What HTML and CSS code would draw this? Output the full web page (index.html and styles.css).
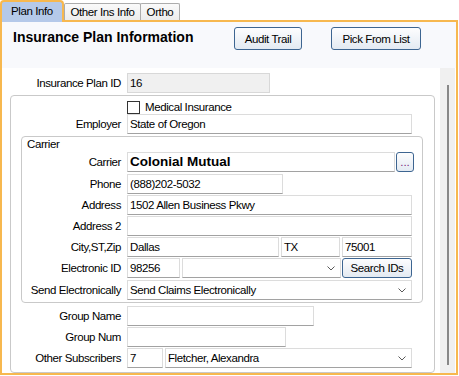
FILE: index.html
```html
<!DOCTYPE html>
<html>
<head>
    <meta charset="UTF-8">
    <title>Insurance Plan</title>
    <link rel="stylesheet" href="styles.css">
</head>
<body>
    <div class="tabs">
        <div class="tab active">Plan Info</div>
        <div class="tab other">Other Ins Info</div>
        <div class="tab ortho">Ortho</div>
    </div>
    <div class="panel">
        <div class="header">
            <div class="title">Insurance Plan Information</div>
            <button class="btn audit">Audit Trail</button>
            <button class="btn pick">Pick From List</button>
        </div>
        <div class="body">
            <div class="content">
                <div class="row">
                    <span class="label">Insurance Plan ID</span>
                    <span class="field readonly w-id">16</span>
                </div>
                <div class="group outer">
                    <div class="check-row">
                        <span class="checkbox"></span>
                        <span class="check-text">Medical Insurance</span>
                    </div>
                    <div class="row">
                        <span class="label">Employer</span>
                        <span class="field w-full">State of Oregon</span>
                    </div>
                    <div class="group carrier">
                        <div class="legend">Carrier</div>
                        <div class="row gap2">
                            <span class="label">Carrier</span>
                            <span class="field bold w-carrier">Colonial Mutual</span>
                            <button class="btn dots">...</button>
                        </div>
                        <div class="row gap1">
                            <span class="label">Phone</span>
                            <span class="field w-phone">(888)202-5032</span>
                        </div>
                        <div class="row gap1">
                            <span class="label">Address</span>
                            <span class="field w-full">1502 Allen Business Pkwy</span>
                        </div>
                        <div class="row gap1">
                            <span class="label">Address 2</span>
                            <span class="field w-full"></span>
                        </div>
                        <div class="row gap1">
                            <span class="label">City,ST,Zip</span>
                            <span class="field w-city">Dallas</span>
                            <span class="field w-st">TX</span>
                            <span class="field w-zip">75001</span>
                        </div>
                        <div class="row gap2">
                            <span class="label">Electronic ID</span>
                            <span class="field w-eid">98256</span>
                            <span class="field combo w-eidcombo">
                                <span></span>
                                <svg width="8" height="5" viewBox="0 0 8 5"><path d="M0.5 0.5 L4 4 L7.5 0.5" fill="none" stroke="#5a5a5a"/></svg>
                            </span>
                            <button class="btn search">Search IDs</button>
                        </div>
                        <div class="row">
                            <span class="label">Send Electronically</span>
                            <span class="field combo w-full">
                                <span>Send Claims Electronically</span>
                                <svg width="8" height="5" viewBox="0 0 8 5"><path d="M0.5 0.5 L4 4 L7.5 0.5" fill="none" stroke="#5a5a5a"/></svg>
                            </span>
                        </div>
                    </div>
                    <div class="row group-name">
                        <span class="label">Group Name</span>
                        <span class="field w-gname"></span>
                    </div>
                    <div class="row gap1">
                        <span class="label">Group Num</span>
                        <span class="field w-gnum"></span>
                    </div>
                    <div class="row gap1">
                        <span class="label">Other Subscribers</span>
                        <span class="field w-count">7</span>
                        <span class="field combo w-sub">
                            <span>Fletcher, Alexandra</span>
                            <svg width="8" height="5" viewBox="0 0 8 5"><path d="M0.5 0.5 L4 4 L7.5 0.5" fill="none" stroke="#5a5a5a"/></svg>
                        </span>
                    </div>
                </div>
            </div>
            <div class="scrollbar"><div class="thumb"></div></div>
        </div>
    </div>
</body>
</html>
```

FILE: styles.css
```css
*{
    box-sizing: border-box;
}
body{
    margin: 0;
    background-color: #ffffff;
    font-family: "Liberation Sans", Arial, sans-serif;
    font-size: 11.5px;
    letter-spacing: -0.4px;
    color: #000000;
}

/* tabs */
.tabs{
    display: flex;
    align-items: flex-end;
    height: 22px;
    margin-bottom: -2px;
    position: relative;
    z-index: 1;
}
.tab{
    height: 17px;
    margin-bottom: 2px;
    border: 1px solid #acacac;
    border-bottom: none;
    border-radius: 2px 2px 0 0;
    background: linear-gradient(#fafafa, #ececec);
    line-height: 16px;
    text-align: center;
}
.tab.active{
    width: 64px;
    height: 22px;
    margin-bottom: 0;
    border: 2px solid #f7b84f;
    border-bottom: none;
    border-radius: 4px 4px 0 0;
    background: #b5c9e9;
    line-height: 18px;
    text-align: left;
    padding-left: 9px;
}
.tab.other{
    width: 77px;
}
.tab.ortho{
    width: 40px;
    margin-left: -1px;
}

/* panel */
.panel{
    width: 458px;
    height: 355px;
    border: 2px solid #f7b84f;
    display: flex;
    flex-direction: column;
}
.header{
    flex: none;
    height: 46px;
    background-color: #f8f9fc;
    display: flex;
    align-items: flex-start;
    padding: 5px 0 0 11px;
}
.title{
    width: 221px;
    margin-top: 2px;
    font-size: 14px;
    font-weight: bold;
    letter-spacing: 0;
    line-height: 16px;
}
.btn{
    font-family: inherit;
    font-size: 11.5px;
    letter-spacing: -0.4px;
    color: #000000;
    padding: 0;
    border: 1px solid #3d6591;
    border-radius: 3px;
    background: linear-gradient(#fdfdfe, #e3eaf2);
}
.audit{
    width: 68px;
    height: 23px;
}
.pick{
    width: 90px;
    height: 23px;
    margin-left: 29px;
}

.body{
    flex: 1;
    display: flex;
    background-color: #ffffff;
}
.content{
    flex: 1;
    padding-top: 5px;
}
.scrollbar{
    width: 15px;
    margin-right: 1px;
    background-color: #f0f0f0;
    padding: 17px 0 0 7px;
}
.thumb{
    width: 2px;
    height: 280px;
    background-color: #888888;
}

/* rows */
.row{
    display: flex;
    align-items: center;
    height: 20px;
}
.gap1{
    margin-bottom: 1px;
}
.gap2{
    margin-bottom: 2px;
}
.label{
    flex: none;
    width: 119px;
    margin-right: 6px;
    text-align: right;
    white-space: nowrap;
}
.outer .label{
    width: 110px;
}
.carrier .label{
    width: 99px;
}

.field{
    flex: none;
    height: 20px;
    border: 1px solid #dcdcdc;
    border-bottom-color: #a2a2a2;
    background-color: #ffffff;
    padding-left: 2px;
    line-height: 18px;
    white-space: nowrap;
    overflow: hidden;
    margin-right: 2px;
}
.readonly{
    background-color: #f0f0f0;
    border-color: #d8d8d8;
}
.bold{
    font-size: 13.5px;
    font-weight: bold;
    letter-spacing: 0;
    margin-right: 1px;
}
.combo{
    display: flex;
    align-items: center;
    justify-content: space-between;
    padding-right: 5px;
}

.w-id{ width: 143px; }
.w-full{ width: 285px; }
.w-carrier{ width: 268px; }
.w-phone{ width: 156px; }
.w-city{ width: 152px; }
.w-st{ width: 59px; }
.w-zip{ width: 70px; }
.w-eid{ width: 53px; }
.w-eidcombo{ width: 159px; margin-right: 1px; }
.w-gname{ width: 187px; }
.w-gnum{ width: 159px; }
.w-count{ width: 36px; }
.w-sub{ width: 247px; }

.dots{
    width: 18px;
    height: 20px;
    color: #7a1f7a;
    letter-spacing: 0;
    line-height: 16px;
}
.search{
    width: 70px;
    height: 20px;
}

/* group boxes */
.group{
    border: 1px solid #c9c9c9;
    border-radius: 4px;
}
.outer{
    width: 425px;
    height: 278px;
    margin: 2px 0 0 8px;
}
.carrier{
    width: 402px;
    height: 167px;
    margin: 2px 0 0 10px;
}
.legend{
    height: 15px;
    line-height: 15px;
    padding-left: 5px;
}
.group-name{
    margin-top: 3px;
    margin-bottom: 1px;
}

.check-row{
    display: flex;
    align-items: center;
    height: 14px;
    margin-top: 4px;
    padding-left: 116px;
}
.checkbox{
    width: 13px;
    height: 13px;
    border: 1px solid #333333;
    background-color: #ffffff;
}
.check-text{
    margin-left: 5px;
}
```
